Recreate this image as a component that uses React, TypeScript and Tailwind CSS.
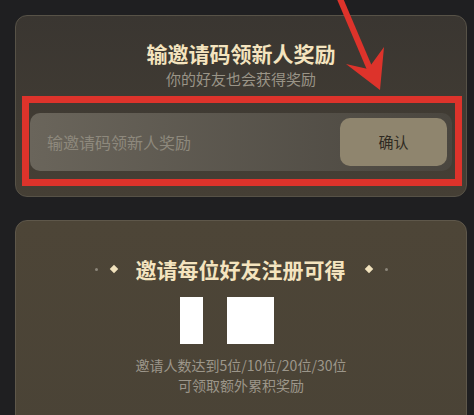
import React from "react";

export default function App() {
  return (
    <div
      className="relative w-[474px] h-[415px] overflow-hidden bg-[#1f1f21]"
      style={{ fontFamily: '"Noto Sans CJK SC", "Noto Sans", sans-serif' }}
    >
      <div className="pt-[15px] pl-[15px]">
        {/* Card 1 */}
        <div className="w-[452px] h-[182px] rounded-[12px] border border-[#575247] bg-gradient-to-b from-[#3a3631] to-[#453f35] px-[14px] pt-[23px] flex flex-col items-center">
          <div className="text-[21px] leading-[28px] font-bold text-[#f4e4bf]">
            输邀请码领新人奖励
          </div>
          <div className="mt-[2px] text-[15px] leading-[20px] text-[#9a9487]">
            你的好友也会获得奖励
          </div>
          <div className="relative mt-[24px] w-[422px] h-[58px]">
            <div className="w-full h-full rounded-[10px] bg-gradient-to-r from-[#6a655b] to-[#4a463f] flex items-center justify-between pl-[17px] pr-[5px]">
              <span className="text-[16px] text-[#8e897d]">输邀请码领新人奖励</span>
              <div className="w-[107px] h-[48px] rounded-[10px] bg-[#8f856e] flex items-center justify-center text-[15px] text-[#2f2a22]">
                确认
              </div>
            </div>
            <div className="absolute -left-[8px] -right-[10px] -top-[17px] -bottom-[15px] border-[7px] border-[#dd332b]" />
          </div>
        </div>

        {/* Card 2 */}
        <div className="mt-[23px] w-[452px] h-[220px] rounded-t-[12px] border border-[#5e574a] bg-gradient-to-b from-[#4d4537] to-[#4a4336] pt-[34px] flex flex-col">
          <div className="flex items-center justify-center">
            <span className="w-[3px] h-[3px] rounded-full bg-[#8b8579]" />
            <span className="ml-[13px] w-[6px] h-[6px] rotate-45 bg-[#f1e2bd]" />
            <span className="ml-[19px] text-[21px] leading-[28px] font-bold text-[#f4e4bf]">
              邀请每位好友注册可得
            </span>
            <span className="ml-[20px] w-[6px] h-[6px] rotate-45 bg-[#f1e2bd]" />
            <span className="ml-[13px] w-[3px] h-[3px] rounded-full bg-[#8b8579]" />
          </div>
          <div className="mt-[14px] ml-[164px] flex gap-[24px]">
            <div className="w-[23px] h-[47px] bg-white" />
            <div className="w-[47px] h-[47px] bg-white" />
          </div>
          <div className="mt-[11px] flex flex-col items-center text-[14px] leading-[21px] text-[#9c968a]">
            <div>邀请人数达到5位/10位/20位/30位</div>
            <div className="-mt-[1px]">可领取额外累积奖励</div>
          </div>
        </div>
      </div>

      {/* Arrow annotation */}
      <svg className="absolute left-0 top-0" width="474" height="110" viewBox="0 0 474 110">
        <line x1="338" y1="-6" x2="372" y2="74" stroke="#dd332b" strokeWidth="6" />
        <polygon points="380,90 346,64 368,69 384,47" fill="#dd332b" />
      </svg>
    </div>
  );
}
